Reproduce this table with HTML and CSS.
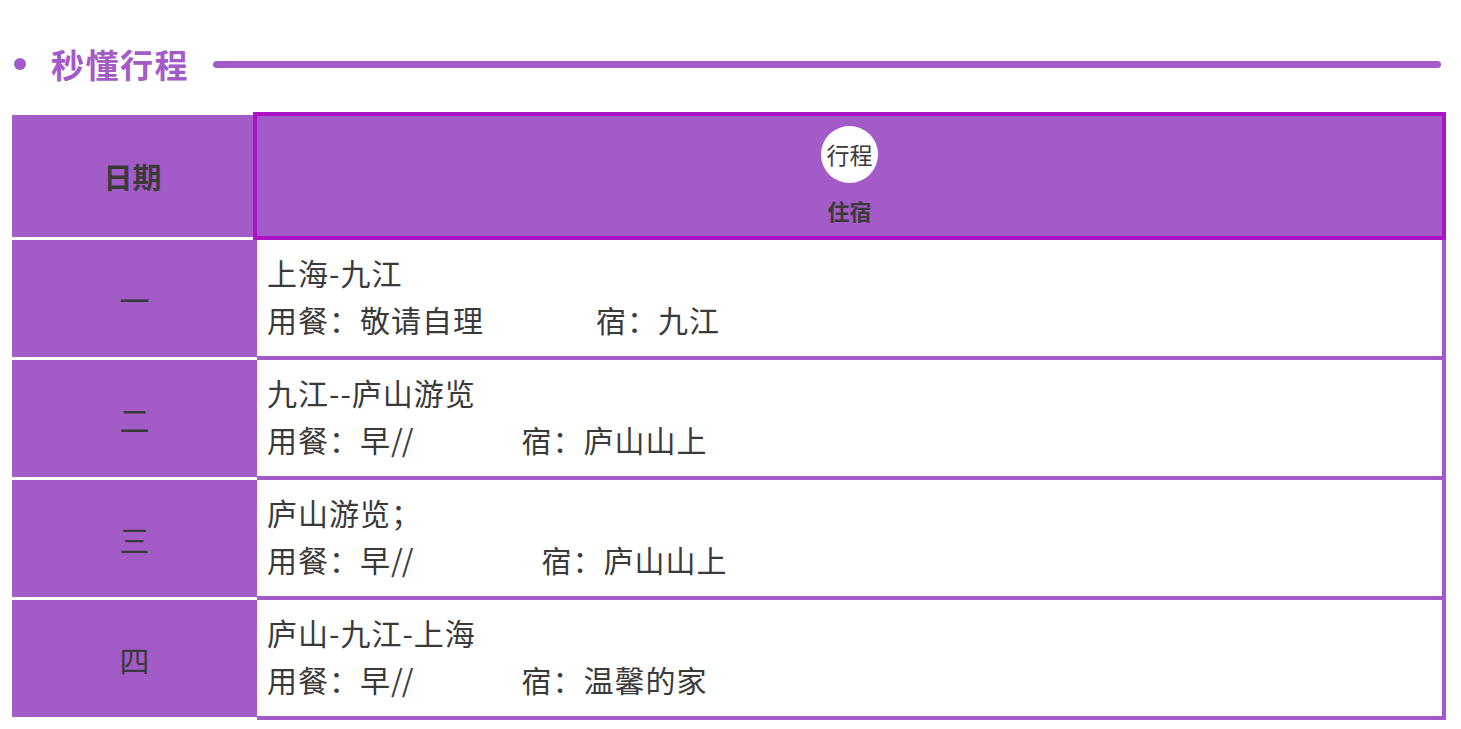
FILE: index.html
```html
<!DOCTYPE html>
<html lang="zh">
<head>
<meta charset="utf-8">
<title>秒懂行程</title>
<link rel="stylesheet" href="styles.css">
</head>
<body>
<div class="section-title">
  <span class="dot"></span>
  <h2 class="title-text">秒懂行程</h2>
  <span class="title-line"></span>
</div>
<div class="schedule">
  <div class="head-row">
    <div class="head-date">日期</div>
    <div class="head-plan">
      <div class="badge">行程</div>
      <div class="head-sub">住宿</div>
    </div>
  </div>
  <div class="row">
    <div class="date">一</div>
    <div class="plan">
      <div class="line">上海-九江</div>
      <div class="line">用餐：敬请自理<span class="lodge gap-1">宿：九江</span></div>
    </div>
  </div>
  <div class="row">
    <div class="date">二</div>
    <div class="plan">
      <div class="line">九江--庐山游览</div>
      <div class="line">用餐：早<span class="latin">//</span><span class="lodge gap-2">宿：庐山山上</span></div>
    </div>
  </div>
  <div class="row">
    <div class="date">三</div>
    <div class="plan">
      <div class="line">庐山游览；</div>
      <div class="line">用餐：早<span class="latin">//</span><span class="lodge gap-3">宿：庐山山上</span></div>
    </div>
  </div>
  <div class="row">
    <div class="date">四</div>
    <div class="plan">
      <div class="line">庐山-九江-上海</div>
      <div class="line">用餐：早<span class="latin">//</span><span class="lodge gap-2">宿：温馨的家</span></div>
    </div>
  </div>
</div>
</body>
</html>
```

FILE: styles.css
```css
* { box-sizing: border-box; }
html, body {
  margin: 0;
  padding: 0;
  background: #ffffff;
}
body {
  font-family: "Noto Sans CJK SC", "Noto Sans", sans-serif;
  color: #3a3a3a;
  width: 1461px;
}
.section-title {
  display: flex;
  align-items: center;
  height: 40px;
  margin-top: 44px;
  padding-left: 14px;
  padding-right: 20px;
}
.dot {
  width: 12px;
  height: 12px;
  border-radius: 50%;
  background: #a35bc8;
  flex: none;
}
.title-text {
  margin: 0 24px 0 25px;
  font-size: 33px;
  font-weight: 700;
  letter-spacing: 1.5px;
  line-height: 40px;
  color: #a35bc8;
}
.title-line {
  flex: 1;
  height: 7px;
  border-radius: 4px;
  background: #a35bc8;
}
.schedule {
  margin-top: 28px;
  margin-left: 12px;
  width: 1434px;
  display: flex;
  flex-direction: column;
}
.head-row {
  display: flex;
  height: 128px;
}
.head-date {
  width: 241px;
  margin: 3px 0;
  background: #a35bc8;
  display: flex;
  align-items: center;
  justify-content: center;
  font-size: 29px;
  font-weight: 700;
}
.head-plan {
  flex: 1;
  border: 4px solid #ad14c6;
  background: #a35bc8;
  display: flex;
  flex-direction: column;
  align-items: center;
  padding-top: 10px;
}
.badge {
  width: 57px;
  height: 57px;
  border-radius: 50%;
  background: #ffffff;
  display: flex;
  align-items: center;
  justify-content: center;
  font-size: 23px;
  line-height: 1;
  color: #3a3a3a;
}
.head-sub {
  margin-top: 12px;
  font-size: 22px;
  font-weight: 700;
  line-height: 30px;
}
.row {
  display: flex;
  height: 120px;
}
.date {
  width: 245px;
  height: 117px;
  background: #a35bc8;
  display: flex;
  align-items: center;
  justify-content: center;
  font-size: 30px;
}
.plan {
  flex: 1;
  background: #ffffff;
  border-right: 4px solid #a35bc8;
  border-bottom: 4px solid #a35bc8;
  padding: 9px 10px 0 10px;
  font-size: 30px;
  letter-spacing: 1px;
}
.line {
  line-height: 47px;
  white-space: nowrap;
}
.latin { letter-spacing: -1px; }
.lodge { display: inline-block; }
.gap-1 { margin-left: 112px; }
.gap-2 { margin-left: 109px; }
.gap-3 { margin-left: 129px; }
```
